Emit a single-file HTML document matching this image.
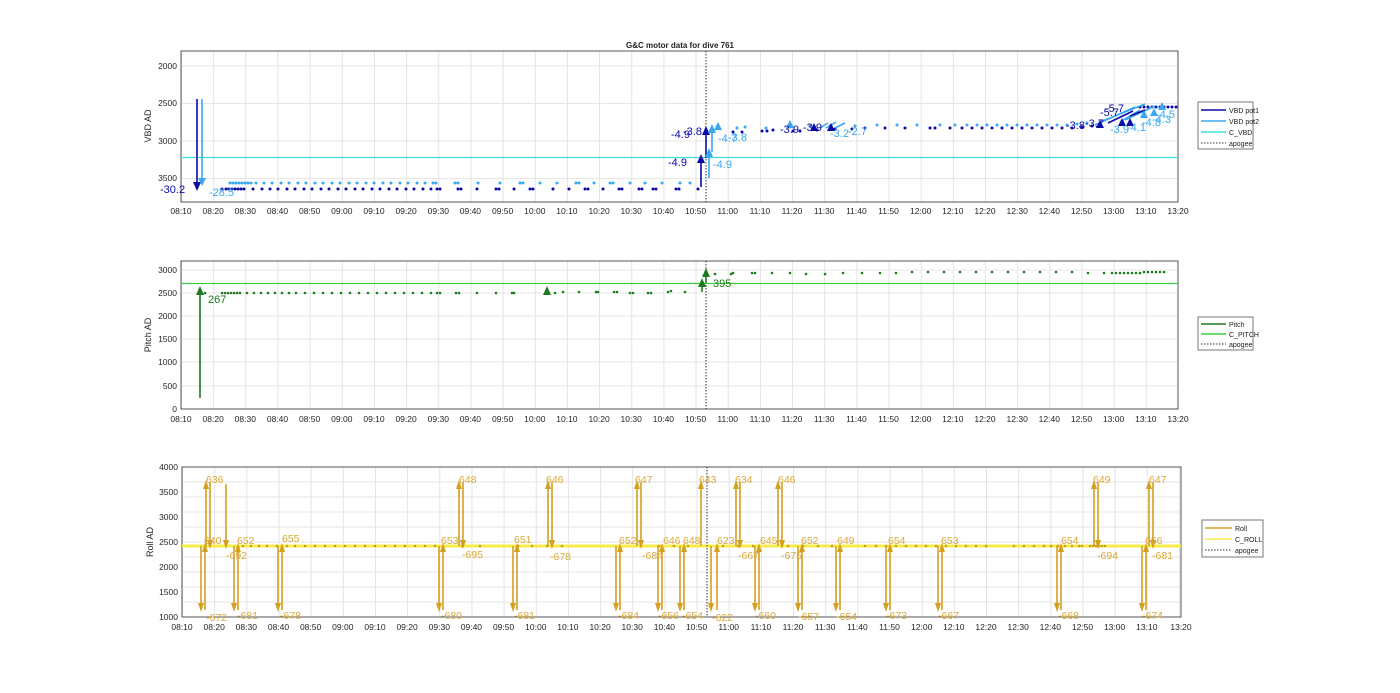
<!DOCTYPE html>
<html><head><meta charset="utf-8"><style>
html,body{margin:0;padding:0;background:#fff;}
svg{display:block;font-family:"Liberation Sans",sans-serif;}
.t{font-size:8.5px;fill:#262626;text-anchor:middle}
.yl{font-size:8.5px;fill:#262626;text-anchor:end}
</style></head><body>
<svg width="1400" height="693" viewBox="0 0 1400 693" xmlns="http://www.w3.org/2000/svg">
<defs>
<pattern id="vg" x="181" y="0" width="32.16" height="10" patternUnits="userSpaceOnUse"><line x1="0.5" y1="0" x2="0.5" y2="10" stroke="#e3e3e3" stroke-width="1"/></pattern>
</defs>

<!-- ============ TOP AXES ============ -->
<text x="680" y="48" font-size="8" font-weight="bold" text-anchor="middle" fill="#222">G&amp;C motor data for dive 761</text>
<rect x="181" y="51" width="997" height="151" fill="url(#vg)"/>
<g stroke="#e6e6e6"><line x1="181" y1="66" x2="1178" y2="66"/><line x1="181" y1="103.5" x2="1178" y2="103.5"/><line x1="181" y1="141" x2="1178" y2="141"/><line x1="181" y1="178.5" x2="1178" y2="178.5"/></g>
<rect x="181" y="51" width="997" height="151" fill="none" stroke="#555" stroke-width="1"/>
<text class="yl" x="177" y="69">2000</text><text class="yl" x="177" y="106">2500</text><text class="yl" x="177" y="144">3000</text><text class="yl" x="177" y="181">3500</text>
<text font-size="9" fill="#262626" text-anchor="middle" transform="translate(151,126) rotate(-90)">VBD AD</text>
<line x1="181" y1="157.5" x2="1178" y2="157.5" stroke="#3fdede" stroke-width="1.3"/>
<line x1="706" y1="51" x2="706" y2="202" stroke="#333" stroke-dasharray="1.5,1.5"/>
<!-- dots -->
<path d="M222 189h0M226 189h0M229 189h0M232 189h0M235 189h0M238 189h0M241 189h0M244 189h0M253 189h0M262 189h0M270 189h0M278 189h0M287 189h0M295 189h0M304 189h0M312 189h0M321 189h0M329 189h0M338 189h0M346 189h0M355 189h0M363 189h0M372 189h0M380 189h0M389 189h0M397 189h0M406 189h0M414 189h0M423 189h0M431 189h0M437 189h0M440 189h0M458 189h0M461 189h0M477 189h0M496 189h0M499 189h0M514 189h0M530 189h0M533 189h0M553 189h0M569 189h0M585 189h0M588 189h0M603 189h0M619 189h0M622 189h0M639 189h0M642 189h0M653 189h0M656 189h0M676 189h0M679 189h0M698 189h0" stroke="#0a0aa8" stroke-width="3" stroke-linecap="round" fill="none"/>
<path d="M230 183h0M233 183h0M236 183h0M239 183h0M242 183h0M245 183h0M248 183h0M251 183h0M256 183h0M264 183h0M272 183h0M281 183h0M289 183h0M298 183h0M306 183h0M315 183h0M323 183h0M332 183h0M340 183h0M349 183h0M357 183h0M366 183h0M374 183h0M383 183h0M391 183h0M400 183h0M408 183h0M417 183h0M425 183h0M433 183h0M436 183h0M455 183h0M458 183h0M478 183h0M500 183h0M520 183h0M523 183h0M540 183h0M557 183h0M576 183h0M579 183h0M594 183h0M610 183h0M613 183h0M630 183h0M645 183h0M662 183h0M680 183h0M690 183h0" stroke="#3aa8f0" stroke-width="3" stroke-linecap="round" fill="none"/>
<path d="M733 132h0M742 132h0M762 131h0M767 131h0M773 130h0M793 131h0M800 131h0M817 130h0M835 129h0M852 129h0M865 128h0M885 128h0M905 128h0M930 128h0M935 128h0M950 128h0M962 128h0M972 128h0M982 128h0M992 128h0M1002 128h0M1012 128h0M1022 128h0M1032 128h0M1042 128h0M1052 128h0M1062 128h0M1072 128h0M1082 127h0M1092 126h0" stroke="#0a0aa8" stroke-width="3" stroke-linecap="round" fill="none"/>
<path d="M737 128h0M745 127h0M766 128h0M790 127h0M810 126h0M830 126h0M855 126h0M877 125h0M897 125h0M917 125h0M940 125h0M955 125h0M967 125h0M977 125h0M987 125h0M997 125h0M1007 125h0M1017 125h0M1027 125h0M1037 125h0M1047 125h0M1057 125h0M1067 125h0M1077 124h0M1087 123h0" stroke="#3aa8f0" stroke-width="3" stroke-linecap="round" fill="none"/>
<path d="M1140 107h0m4 0h0m4 0h0m4 0h0m4 0h0m4 0h0m4 0h0m4 0h0m4 0h0m4 0h0" stroke="#0a0aa8" stroke-width="3" stroke-linecap="round" fill="none"/>
<!-- arrows -->
<g stroke-width="1.6" fill="none"><line x1="197" y1="99" x2="197" y2="185" stroke="#0a0aa8"/><line x1="202" y1="99" x2="202" y2="180" stroke="#3aa8f0"/>
<line x1="701" y1="187" x2="701" y2="160" stroke="#0a0aa8"/><line x1="706" y1="158" x2="706" y2="133" stroke="#0a0aa8"/>
<line x1="709" y1="178" x2="709" y2="154" stroke="#3aa8f0"/><line x1="712" y1="152" x2="712" y2="130" stroke="#3aa8f0"/>
<path d="M1095 125l40-18M1100 122l45-18M1120 122l20-12M1125 120l30-14" stroke="#3aa8f0"/><path d="M1108 123l25-12M1130 116l15-6" stroke="#0a0aa8"/>
<path d="M820 128l8-5M835 128l10-5M826 128l10-6" stroke="#3aa8f0"/></g>
<g fill="#0a0aa8"><polygon points="193,182 201,182 197,191"/><polygon points="697,163 705,163 701,154"/><polygon points="702,135 710,135 706,126"/><polygon points="810,131 818,131 814,123"/><polygon points="827,131 835,131 831,123"/><polygon points="1096,128 1104,128 1100,120"/><polygon points="1118,126 1126,126 1122,118"/><polygon points="1126,126 1134,126 1130,118"/></g>
<g fill="#3aa8f0"><polygon points="198,178 206,178 202,186"/><polygon points="705,157 713,157 709,148"/><polygon points="708,133 716,133 712,124"/><polygon points="714,130 722,130 718,122"/><polygon points="786,128 794,128 790,120"/><polygon points="1150,116 1158,116 1154,108"/><polygon points="1140,118 1148,118 1144,110"/><polygon points="1158,110 1166,110 1162,102"/></g>
<g font-size="11"><text x="160" y="193" fill="#0a0aa8">-30.2</text><text x="209" y="196" fill="#3aa8f0">-28.5</text>
<text x="668" y="166" fill="#0a0aa8">-4.9</text><text x="713" y="168" fill="#3aa8f0">-4.9</text><text x="671" y="138" fill="#0a0aa8">-4.9</text><text x="683" y="135" fill="#0a0aa8">-3.8</text><text x="718" y="142" fill="#3aa8f0">-4.7</text><text x="728" y="141" fill="#3aa8f0">-3.8</text>
<text x="780" y="133" fill="#0a0aa8">-3.9</text><text x="803" y="131" fill="#0a0aa8">-3.9</text><text x="830" y="137" fill="#3aa8f0">-3.2</text><text x="848" y="135" fill="#3aa8f0">-2.7</text>
<text x="1066" y="129" fill="#0a0aa8">-3.8</text><text x="1085" y="127" fill="#0a0aa8">-3.7</text><text x="1100" y="116" fill="#0a0aa8">-5.7</text><text x="1105" y="112" fill="#0a0aa8">-5.7</text><text x="1110" y="133" fill="#3aa8f0">-3.9</text><text x="1127" y="131" fill="#3aa8f0">-4.1</text><text x="1142" y="126" fill="#3aa8f0">-4.8</text><text x="1152" y="123" fill="#3aa8f0">-4.3</text><text x="1156" y="118" fill="#3aa8f0">-4.5</text></g>
<!-- legend -->
<rect x="1198" y="102" width="55" height="47" fill="#fff" stroke="#777"/>
<g stroke-width="1.6"><line x1="1201" y1="110" x2="1226" y2="110" stroke="#0a0aa8"/><line x1="1201" y1="121" x2="1226" y2="121" stroke="#3aa8f0"/><line x1="1201" y1="132" x2="1226" y2="132" stroke="#3fdede"/><line x1="1201" y1="143" x2="1226" y2="143" stroke="#333" stroke-width="1" stroke-dasharray="1.5,1.5"/></g>
<g font-size="7" fill="#222"><text x="1229" y="113">VBD pot1</text><text x="1229" y="124">VBD pot2</text><text x="1229" y="135">C_VBD</text><text x="1229" y="146">apogee</text></g>
<g class="t">
<text x="181" y="214">08:10</text><text x="213.2" y="214">08:20</text><text x="245.3" y="214">08:30</text><text x="277.5" y="214">08:40</text><text x="309.6" y="214">08:50</text><text x="341.8" y="214">09:00</text><text x="374" y="214">09:10</text><text x="406.1" y="214">09:20</text><text x="438.3" y="214">09:30</text><text x="470.4" y="214">09:40</text><text x="502.6" y="214">09:50</text><text x="534.8" y="214">10:00</text><text x="566.9" y="214">10:10</text><text x="599.1" y="214">10:20</text><text x="631.2" y="214">10:30</text><text x="663.4" y="214">10:40</text><text x="695.6" y="214">10:50</text><text x="727.7" y="214">11:00</text><text x="759.9" y="214">11:10</text><text x="792" y="214">11:20</text><text x="824.2" y="214">11:30</text><text x="856.4" y="214">11:40</text><text x="888.5" y="214">11:50</text><text x="920.7" y="214">12:00</text><text x="952.8" y="214">12:10</text><text x="985" y="214">12:20</text><text x="1017.2" y="214">12:30</text><text x="1049.3" y="214">12:40</text><text x="1081.5" y="214">12:50</text><text x="1113.6" y="214">13:00</text><text x="1145.8" y="214">13:10</text><text x="1178" y="214">13:20</text>
</g>

<!-- ============ MIDDLE AXES ============ -->
<rect x="181" y="261" width="997" height="148" fill="url(#vg)"/>
<g stroke="#e6e6e6"><line x1="181" y1="270" x2="1178" y2="270"/><line x1="181" y1="293" x2="1178" y2="293"/><line x1="181" y1="316" x2="1178" y2="316"/><line x1="181" y1="339" x2="1178" y2="339"/><line x1="181" y1="362" x2="1178" y2="362"/><line x1="181" y1="386" x2="1178" y2="386"/></g>
<rect x="181" y="261" width="997" height="148" fill="none" stroke="#555"/>
<g class="yl"><text x="177" y="273">3000</text><text x="177" y="296">2500</text><text x="177" y="319">2000</text><text x="177" y="342">1500</text><text x="177" y="365">1000</text><text x="177" y="389">500</text><text x="177" y="412">0</text></g>
<text font-size="9" fill="#262626" text-anchor="middle" transform="translate(151,335) rotate(-90)">Pitch AD</text>
<line x1="181" y1="283.5" x2="1178" y2="283.5" stroke="#3ecf3e" stroke-width="1.3"/>
<line x1="706" y1="261" x2="706" y2="409" stroke="#333" stroke-dasharray="1.5,1.5"/>
<path d="M205 293h0M222 293h0M225 293h0M228 293h0M231 293h0M234 293h0M237 293h0M240 293h0M247 293h0M254 293h0M261 293h0M268 293h0M275 293h0M282 293h0M289 293h0M296 293h0M305 293h0M314 293h0M323 293h0M332 293h0M341 293h0M350 293h0M359 293h0M368 293h0M377 293h0M386 293h0M395 293h0M404 293h0M413 293h0M422 293h0M431 293h0M437 293h0M440 293h0M456 293h0M459 293h0M477 293h0M496 293h0M512 293h0M514 293h0M555 293h0M563 292h0M579 292h0M596 292h0M598 292h0M614 292h0M617 292h0M630 293h0M633 293h0M648 293h0M651 293h0M668 292h0M671 291h0M685 292h0" stroke="#1e7a1e" stroke-width="2.6" stroke-linecap="round" fill="none"/>
<path d="M715 274h0M731 274h0M733 273h0M752 273h0M755 273h0M772 273h0M790 273h0M806 274h0M825 274h0M843 273h0M862 273h0M880 273h0M896 273h0M912 272h0M928 272h0M944 272h0M960 272h0M976 272h0M992 272h0M1008 272h0M1024 272h0M1040 272h0M1056 272h0M1072 272h0M1088 273h0M1104 273h0M1112 273h0M1116 273h0M1120 273h0M1124 273h0M1128 273h0M1132 273h0M1136 273h0M1140 273h0M1144 272h0M1148 272h0M1152 272h0M1156 272h0M1160 272h0M1164 272h0" stroke="#1e7a1e" stroke-width="2.6" stroke-linecap="round" fill="none"/>
<g stroke="#1e7a1e" stroke-width="1.6"><line x1="200" y1="398" x2="200" y2="293"/><line x1="702" y1="292" x2="702" y2="283"/><line x1="706" y1="283" x2="706" y2="272"/></g>
<g fill="#1e7a1e"><polygon points="196,295 204,295 200,286"/><polygon points="543,295 551,295 547,286"/><polygon points="698,287 706,287 702,278"/><polygon points="702,277 710,277 706,268"/></g>
<text x="208" y="303" font-size="11" fill="#1e7a1e">267</text><text x="713" y="287" font-size="11" fill="#1e7a1e">395</text>
<rect x="1198" y="317" width="55" height="33" fill="#fff" stroke="#777"/>
<g stroke-width="1.6"><line x1="1201" y1="324" x2="1226" y2="324" stroke="#1e7a1e"/><line x1="1201" y1="334" x2="1226" y2="334" stroke="#3ecf3e"/><line x1="1201" y1="344" x2="1226" y2="344" stroke="#333" stroke-width="1" stroke-dasharray="1.5,1.5"/></g>
<g font-size="7" fill="#222"><text x="1229" y="327">Pitch</text><text x="1229" y="337">C_PITCH</text><text x="1229" y="347">apogee</text></g>
<g class="t">
<text x="181" y="422">08:10</text><text x="213.2" y="422">08:20</text><text x="245.3" y="422">08:30</text><text x="277.5" y="422">08:40</text><text x="309.6" y="422">08:50</text><text x="341.8" y="422">09:00</text><text x="374" y="422">09:10</text><text x="406.1" y="422">09:20</text><text x="438.3" y="422">09:30</text><text x="470.4" y="422">09:40</text><text x="502.6" y="422">09:50</text><text x="534.8" y="422">10:00</text><text x="566.9" y="422">10:10</text><text x="599.1" y="422">10:20</text><text x="631.2" y="422">10:30</text><text x="663.4" y="422">10:40</text><text x="695.6" y="422">10:50</text><text x="727.7" y="422">11:00</text><text x="759.9" y="422">11:10</text><text x="792" y="422">11:20</text><text x="824.2" y="422">11:30</text><text x="856.4" y="422">11:40</text><text x="888.5" y="422">11:50</text><text x="920.7" y="422">12:00</text><text x="952.8" y="422">12:10</text><text x="985" y="422">12:20</text><text x="1017.2" y="422">12:30</text><text x="1049.3" y="422">12:40</text><text x="1081.5" y="422">12:50</text><text x="1113.6" y="422">13:00</text><text x="1145.8" y="422">13:10</text><text x="1178" y="422">13:20</text>
</g>

<!-- ============ BOTTOM AXES ============ -->
<g transform="translate(1,0)">
<rect x="181" y="467" width="999" height="150" fill="url(#vg)"/>
<g stroke="#e6e6e6"><line x1="181" y1="482" x2="1180" y2="482"/><line x1="181" y1="497" x2="1180" y2="497"/><line x1="181" y1="512" x2="1180" y2="512"/><line x1="181" y1="527" x2="1180" y2="527"/><line x1="181" y1="542" x2="1180" y2="542"/><line x1="181" y1="557" x2="1180" y2="557"/><line x1="181" y1="572" x2="1180" y2="572"/><line x1="181" y1="587" x2="1180" y2="587"/><line x1="181" y1="602" x2="1180" y2="602"/></g>
<rect x="181" y="467" width="999" height="150" fill="none" stroke="#555"/>
<g class="yl"><text x="177" y="470">4000</text><text x="177" y="495">3500</text><text x="177" y="520">3000</text><text x="177" y="545">2500</text><text x="177" y="570">2000</text><text x="177" y="595">1500</text><text x="177" y="620">1000</text></g>
<text font-size="9" fill="#262626" text-anchor="middle" transform="translate(152,542) rotate(-90)">Roll AD</text>
<line x1="181" y1="546" x2="1180" y2="546" stroke="#f5ec4a" stroke-width="3"/>
<line x1="706" y1="467" x2="706" y2="617" stroke="#333" stroke-dasharray="1.5,1.5"/>
<path d="M242 546h0m8 0h0m8 0h0m8 0h0m10 0h0m10 0h0m8 0h0m10 0h0m10 0h0m10 0h0m10 0h0m10 0h0m10 0h0m10 0h0m10 0h0m10 0h0m10 0h0m10 0h0m10 0h0m10 0h0m10 0h0m27 0h0m18 0h0m38 0h0m14 0h0m15 0h0m15 0h0m97 0h0m15 0h0m14 0h0m35 0h0m15 0h0m15 0h0m35 0h0m15 0h0m15 0h0m14 0h0m33 0h0m11 0h0m10 0h0m10 0h0m10 0h0m10 0h0m10 0h0m10 0h0m10 0h0m10 0h0m10 0h0m10 0h0m10 0h0m28 0h0m10 0h0m10 0h0m10 0h0m7 0h0m7 0h0m7 0h0m7 0h0m7 0h0m3 0h0m8 0h0m3 0h0m3 0h0m3 0h0m3 0h0m3 0h0" stroke="#c99a1e" stroke-width="2.5" stroke-linecap="round" fill="none"/>
<g stroke="#d4a020" stroke-width="1.6">
<path d="M200 546V607M204 610V549M233 546V607M237 610V549M277 546V607M281 610V549M438 546V607M442 610V549M512 546V607M516 610V549M615 546V607M619 610V549M657 546V607M661 610V549M679 546V607M683 610V549M710 546V609M716 610V549M754 546V607M758 610V549M797 546V607M801 610V549M835 546V607M839 610V549M885 546V607M889 610V549M937 546V607M941 610V549M1056 546V607M1060 610V549M1141 546V607M1145 610V549"/>
<path d="M205 546V485M209 482V543M225 484V543M458 546V485M462 482V543M547 546V485M551 482V543M636 546V485M640 482V543M700 546V485M735 546V485M739 482V543M777 546V485M781 482V543M1093 546V485M1097 482V543M1148 546V485M1152 482V543"/>
</g>
<g fill="#d4a020">
<path d="M197 603h6l-3 9zM230 603h6l-3 9zM274 603h6l-3 9zM435 603h6l-3 9zM509 603h6l-3 9zM612 603h6l-3 9zM654 603h6l-3 9zM676 603h6l-3 9zM707 603h6l-3 9zM751 603h6l-3 9zM794 603h6l-3 9zM832 603h6l-3 9zM882 603h6l-3 9zM934 603h6l-3 9zM1053 603h6l-3 9zM1138 603h6l-3 9z"/>
<path d="M201 552h6l-3 -9zM234 552h6l-3 -9zM278 552h6l-3 -9zM439 552h6l-3 -9zM513 552h6l-3 -9zM616 552h6l-3 -9zM658 552h6l-3 -9zM680 552h6l-3 -9zM713 552h6l-3 -9zM755 552h6l-3 -9zM798 552h6l-3 -9zM836 552h6l-3 -9zM886 552h6l-3 -9zM938 552h6l-3 -9zM1057 552h6l-3 -9zM1142 552h6l-3 -9z"/>
<path d="M202 489h6l-3 -9zM455 489h6l-3 -9zM544 489h6l-3 -9zM633 489h6l-3 -9zM697 489h6l-3 -9zM732 489h6l-3 -9zM774 489h6l-3 -9zM1090 489h6l-3 -9zM1145 489h6l-3 -9z"/>
<path d="M206 540h6l-3 9zM222 540h6l-3 9zM459 540h6l-3 9zM548 540h6l-3 9zM637 540h6l-3 9zM736 540h6l-3 9zM778 540h6l-3 9zM1094 540h6l-3 9zM1149 540h6l-3 9z"/>
</g>
<g font-size="10.5" fill="#d9a93a">
<text x="205" y="621">-672</text><text x="203" y="544">640</text><text x="205" y="483">636</text><text x="225" y="559">-692</text><text x="236" y="544">652</text><text x="236" y="619">-681</text><text x="281" y="542">655</text><text x="279" y="619">-678</text>
<text x="440" y="544">653</text><text x="440" y="619">-680</text><text x="458" y="483">648</text><text x="461" y="558">-695</text><text x="513" y="543">651</text><text x="513" y="619">-681</text><text x="545" y="483">646</text><text x="549" y="560">-678</text>
<text x="618" y="544">652</text><text x="617" y="619">-684</text><text x="634" y="483">647</text><text x="641" y="559">-684</text><text x="662" y="544">646</text><text x="657" y="619">-656</text><text x="682" y="544">648</text><text x="681" y="619">-654</text>
<text x="698" y="483">643</text><text x="711" y="621">-622</text><text x="716" y="544">623</text><text x="734" y="483">634</text><text x="737" y="559">-667</text><text x="759" y="544">645</text><text x="754" y="619">-660</text><text x="777" y="483">646</text><text x="780" y="559">-675</text>
<text x="800" y="544">652</text><text x="797" y="620">-657</text><text x="836" y="544">649</text><text x="835" y="620">-654</text><text x="887" y="544">654</text><text x="885" y="619">-673</text><text x="940" y="544">653</text><text x="937" y="619">-667</text>
<text x="1060" y="544">654</text><text x="1057" y="619">-668</text><text x="1092" y="483">649</text><text x="1096" y="559">-694</text><text x="1148" y="483">647</text><text x="1144" y="544">656</text><text x="1151" y="559">-681</text><text x="1141" y="619">-674</text>
</g>
</g>
<rect x="1202" y="520" width="61" height="37" fill="#fff" stroke="#777"/>
<g stroke-width="1.6"><line x1="1205" y1="528" x2="1232" y2="528" stroke="#d4a020"/><line x1="1205" y1="539" x2="1232" y2="539" stroke="#f5ec4a"/><line x1="1205" y1="550" x2="1232" y2="550" stroke="#333" stroke-width="1" stroke-dasharray="1.5,1.5"/></g>
<g font-size="7" fill="#222"><text x="1235" y="531">Roll</text><text x="1235" y="542">C_ROLL</text><text x="1235" y="553">apogee</text></g>
<g class="t" transform="translate(1,0)">
<text x="181" y="630">08:10</text><text x="213.2" y="630">08:20</text><text x="245.3" y="630">08:30</text><text x="277.5" y="630">08:40</text><text x="309.6" y="630">08:50</text><text x="341.8" y="630">09:00</text><text x="374" y="630">09:10</text><text x="406.1" y="630">09:20</text><text x="438.3" y="630">09:30</text><text x="470.4" y="630">09:40</text><text x="502.6" y="630">09:50</text><text x="534.8" y="630">10:00</text><text x="566.9" y="630">10:10</text><text x="599.1" y="630">10:20</text><text x="631.2" y="630">10:30</text><text x="663.4" y="630">10:40</text><text x="695.6" y="630">10:50</text><text x="727.7" y="630">11:00</text><text x="759.9" y="630">11:10</text><text x="792" y="630">11:20</text><text x="824.2" y="630">11:30</text><text x="856.4" y="630">11:40</text><text x="888.5" y="630">11:50</text><text x="920.7" y="630">12:00</text><text x="952.8" y="630">12:10</text><text x="985" y="630">12:20</text><text x="1017.2" y="630">12:30</text><text x="1049.3" y="630">12:40</text><text x="1081.5" y="630">12:50</text><text x="1113.6" y="630">13:00</text><text x="1145.8" y="630">13:10</text><text x="1180" y="630">13:20</text>
</g>
</svg>
</body></html>
